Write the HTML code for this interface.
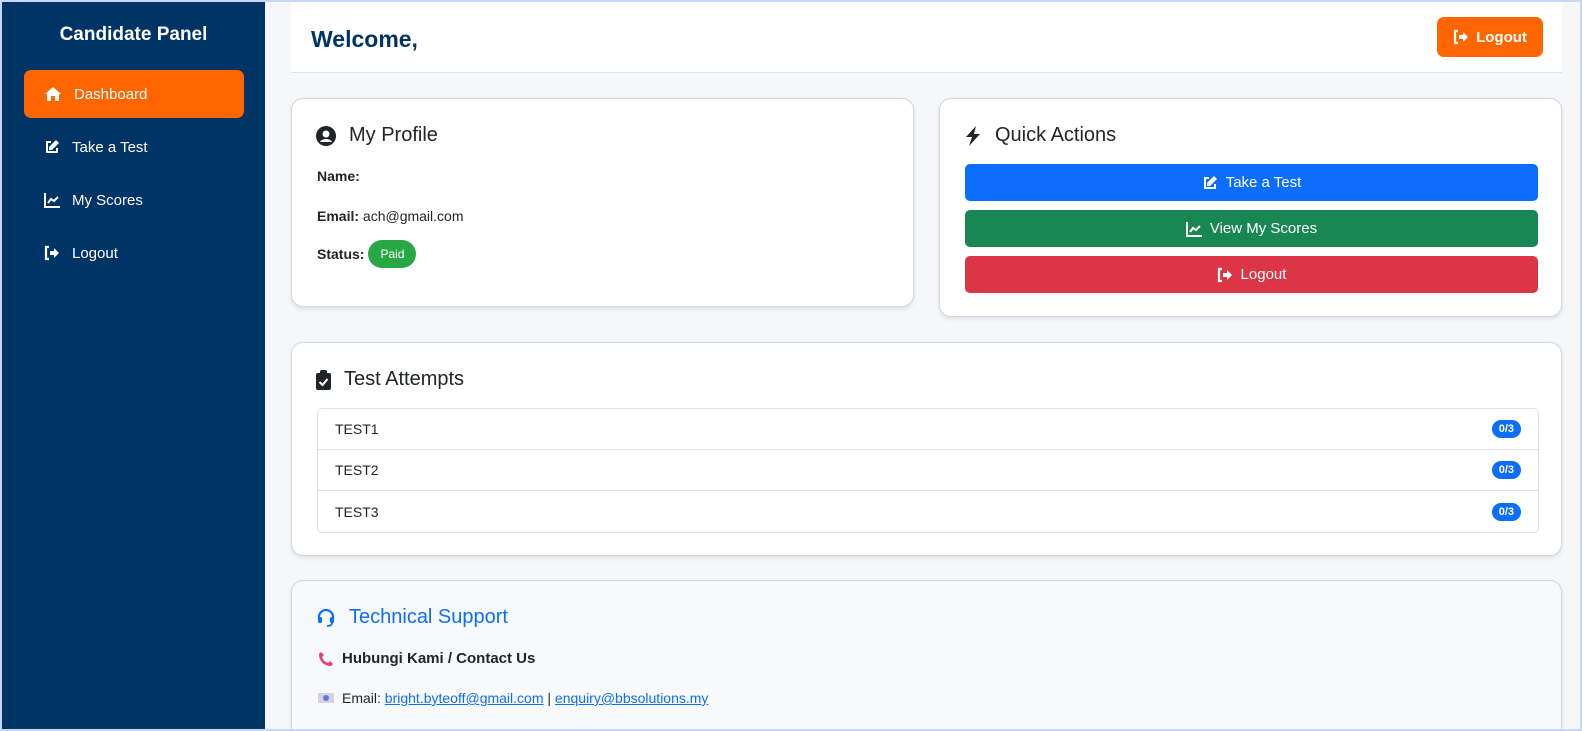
<!DOCTYPE html>
<html><head><meta charset="utf-8"><style>
*{box-sizing:border-box;margin:0;padding:0}
html,body{width:1582px;height:731px;overflow:hidden}
body{font-family:"Liberation Sans",sans-serif;background:#c9d7f7;position:relative;color:#212529}
.page{position:absolute;left:2px;top:2px;width:1578px;height:727px;background:#f5f7fa;overflow:hidden}
.side{position:absolute;left:0;top:0;width:263px;height:727px;background:#003366;color:#fff}
.side h2{position:absolute;top:22px;width:100%;text-align:center;font-size:19px;font-weight:bold}
.nav{position:absolute;left:22px;width:220px;height:48px;border-radius:7px;display:flex;align-items:center;font-size:15px;padding-left:20px}
.nav svg{margin-right:12px}
.abs{position:absolute}
.hdr{left:289px;top:0;width:1271px;height:71px;background:#fff;border-bottom:1px solid #dee2e6}
.hdr h1{position:absolute;left:20px;top:24px;font-size:23px;color:#003366;font-weight:bold}
.lo{position:absolute;left:1146px;top:15px;width:106px;height:40px;background:#ff6600;color:#fff;border-radius:7px;font-weight:bold;font-size:15px;display:flex;align-items:center;justify-content:center;gap:7px}
.card{position:absolute;background:#fff;border:1px solid #d3d6da;border-radius:12px;box-shadow:0 2px 5px rgba(0,0,0,.1)}
.ct{position:absolute;left:24px;top:25px;font-size:20px;display:flex;align-items:center;gap:13px}
.btn{position:absolute;left:25px;width:573px;height:37px;border-radius:5px;color:#fff;font-size:15px;display:flex;align-items:center;justify-content:center;gap:8px}
.row{height:41px;border-bottom:1px solid #dee2e6;display:flex;align-items:center;justify-content:space-between;padding:0 17px;font-size:14px}
.bd{background:#0d6efd;color:#fff;font-size:11px;font-weight:bold;border-radius:10px;padding:3px 7px}
a{color:#0d6efd}
</style></head><body><div class="page">
<div class="side"><h2>Candidate Panel</h2>
<div class="nav" style="top:68px;background:#ff6600"><svg width="18" height="16" viewBox="0 0 18 16"><path d="M9 1L1 8h2v7h4v-5h4v5h4V8h2z" fill="#fff"/></svg>Dashboard</div>
<div class="nav" style="top:121px"><svg width="16" height="16" viewBox="0 0 16 16"><path d="M7 3H3v10h10V9" fill="none" stroke="#fff" stroke-width="2"/><path d="M12 1l3 3-7 7H5V8z" fill="#fff"/></svg>Take a Test</div>
<div class="nav" style="top:174px"><svg width="16" height="16" viewBox="0 0 16 16"><path d="M1 1v14h15" fill="none" stroke="#fff" stroke-width="2"/><path d="M4 11l3-4 3 2 4-4" fill="none" stroke="#fff" stroke-width="2"/></svg>My Scores</div>
<div class="nav" style="top:227px"><svg width="16" height="16" viewBox="0 0 16 16"><path d="M5 2H2v12h3" fill="none" stroke="#fff" stroke-width="2.2"/><path d="M6 6h4V3l5 5-5 5v-3H6z" fill="#fff"/></svg>Logout</div>
</div>
<div class="abs hdr"><h1>Welcome,</h1><div class="lo"><svg width="16" height="16" viewBox="0 0 16 16"><path d="M5 2H2v12h3" fill="none" stroke="#fff" stroke-width="2.2"/><path d="M6 6h4V3l5 5-5 5v-3H6z" fill="#fff"/></svg>Logout</div></div>

<div class="card" style="left:289px;top:96px;width:623px;height:209px">
<div class="ct"><svg width="20" height="20" viewBox="0 0 20 20"><circle cx="10" cy="10" r="10" fill="#212529"/><circle cx="10" cy="8" r="3.5" fill="#fff"/><path d="M4 16c2-4 10-4 12 0" fill="#fff"/></svg>My Profile</div>
<div class="abs" style="left:25px;top:69px;font-size:14px"><b>Name:</b></div>
<div class="abs" style="left:25px;top:109px;font-size:14px"><b>Email:</b> ach@gmail.com</div>
<div class="abs" style="left:25px;top:141px;font-size:14px;display:flex;align-items:center;gap:4px"><b>Status:</b><span style="background:#28a745;color:#fff;border-radius:15px;padding:7px 12px;font-size:12px">Paid</span></div>
</div>

<div class="card" style="left:937px;top:96px;width:623px;height:219px">
<div class="ct"><svg width="18" height="20" viewBox="0 0 18 20"><path d="M12 0L2 11h6l-3 9 11-12H10z" fill="#212529"/></svg>Quick Actions</div>
<div class="btn" style="top:65px;background:#0d6efd"><svg width="16" height="16" viewBox="0 0 16 16"><path d="M7 3H3v10h10V9" fill="none" stroke="#fff" stroke-width="2"/><path d="M12 1l3 3-7 7H5V8z" fill="#fff"/></svg>Take a Test</div>
<div class="btn" style="top:111px;background:#198754"><svg width="16" height="16" viewBox="0 0 16 16"><path d="M1 1v14h15" fill="none" stroke="#fff" stroke-width="2"/><path d="M4 11l3-4 3 2 4-4" fill="none" stroke="#fff" stroke-width="2"/></svg>View My Scores</div>
<div class="btn" style="top:157px;background:#dc3545"><svg width="16" height="16" viewBox="0 0 16 16"><path d="M5 2H2v12h3" fill="none" stroke="#fff" stroke-width="2.2"/><path d="M6 6h4V3l5 5-5 5v-3H6z" fill="#fff"/></svg>Logout</div>
</div>

<div class="card" style="left:289px;top:340px;width:1271px;height:214px">
<div class="ct"><svg width="15" height="20" viewBox="0 0 15 20"><rect x="0" y="3" width="15" height="17" rx="2" fill="#212529"/><rect x="4" y="0" width="7" height="5" rx="2" fill="#212529"/><path d="M3.5 12l3 3 5-6" fill="none" stroke="#fff" stroke-width="2"/></svg>Test Attempts</div>
<div class="abs" style="left:25px;top:65px;width:1222px;border:1px solid #dee2e6;border-radius:5px;overflow:hidden">
<div class="row"><span>TEST1</span><span class="bd">0/3</span></div>
<div class="row"><span>TEST2</span><span class="bd">0/3</span></div>
<div class="row" style="border:0"><span>TEST3</span><span class="bd">0/3</span></div>
</div></div>

<div class="card" style="left:289px;top:578px;width:1271px;height:170px;background:#f8f9fa">
<div class="ct" style="color:#0d6efd"><svg width="20" height="20" viewBox="0 0 20 20"><path d="M3 11V9a7 7 0 0114 0v2" fill="none" stroke="#0d6efd" stroke-width="2.2"/><rect x="2" y="9" width="4" height="6" rx="1.5" fill="#0d6efd"/><rect x="14" y="9" width="4" height="6" rx="1.5" fill="#0d6efd"/><path d="M16 15c0 2-2 3-5 3" fill="none" stroke="#0d6efd" stroke-width="1.8"/></svg>Technical Support</div>
<div class="abs" style="left:26px;top:69px;font-size:15px;font-weight:bold;display:flex;align-items:center;gap:8px"><svg width="16" height="16" viewBox="0 0 16 16"><path d="M3 1l3 3-2 2c1 3 3 5 6 6l2-2 3 3-2 2C6 15 1 10 1 3z" fill="#e0407a"/></svg>Hubungi Kami / Contact Us</div>
<div class="abs" style="left:26px;top:109px;font-size:14px;display:flex;align-items:center;gap:8px"><span style="display:inline-block;width:16px;height:10px;background:#d8d0ea;position:relative"><span style="position:absolute;left:5px;top:2px;width:6px;height:6px;border-radius:50%;background:#5a7fd0"></span></span><span>Email: <a href="#">bright.byteoff@gmail.com</a> | <a href="#">enquiry@bbsolutions.my</a></span></div>
</div>
</div></body></html>
